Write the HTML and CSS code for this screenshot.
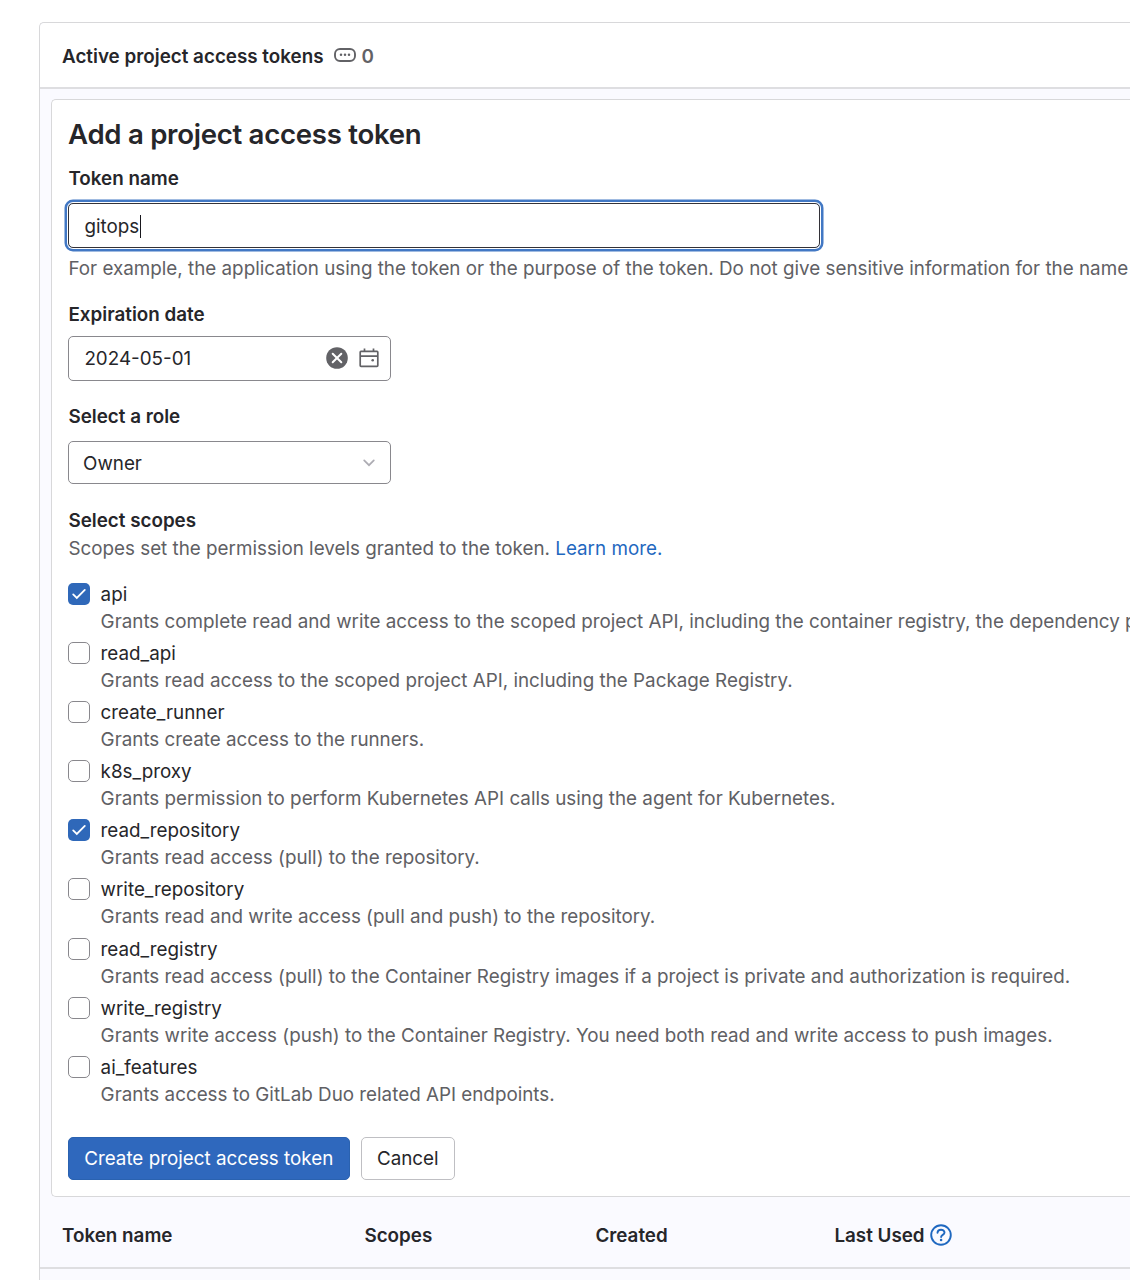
FILE: index.html
```html
<!DOCTYPE html>
<html lang="en">
<head>
<meta charset="utf-8">
<title>Project access tokens</title>
<link rel="stylesheet" href="styles.css">
</head>
<body>
<main class="card">
  <header class="card-header">
    <h2 class="card-title">Active project access tokens</h2>
    <svg class="token-icon" viewBox="0 0 22 14" width="22" height="14"><rect x="1" y="1" width="20" height="12" rx="5" fill="none" stroke="#626266" stroke-width="1.9"/><g fill="#626266"><circle cx="7" cy="6.7" r="1.25"/><circle cx="11" cy="6.7" r="1.25"/><circle cx="15" cy="6.7" r="1.25"/></g></svg>
    <span class="count">0</span>
  </header>
  <form class="form-card">
    <h1 class="form-title"><span>Add a project access token</span></h1>
    <div class="label label-name"><span>Token name</span></div>
    <div class="input input-name"><span>gitops</span><i class="caret"></i></div>
    <p class="hint hint-name"><span>For example, the application using the token or the purpose of the token. Do not give sensitive information for the name</span></p>
    <div class="label label-date"><span>Expiration date</span></div>
    <div class="input input-date">
      <span class="value">2024-05-01</span>
      <svg class="clear" width="22" height="22" viewBox="0 0 22 22"><circle cx="11" cy="11" r="10.8" fill="#626266"/><path d="M6.7 6.7l8.6 8.6M15.3 6.7l-8.6 8.6" stroke="#fff" stroke-width="2" stroke-linecap="round"/></svg>
      <svg class="calendar" width="20" height="20" viewBox="0 0 20 20" fill="none" stroke="#626266" stroke-width="1.7"><rect x="1.2" y="3.4" width="17.6" height="15" rx="0.8"/><path d="M1.2 8.2h17.6M5.5 0.5v3.2M14.5 0.5v3.2"/><circle cx="13.7" cy="12.2" r="1.3" fill="#626266" stroke="none"/></svg>
    </div>
    <div class="label label-role"><span>Select a role</span></div>
    <div class="input input-role">
      <span class="value">Owner</span>
      <svg width="12" height="8" viewBox="0 0 12 8"><path d="M1.2 1.3L6 6.2l4.8-4.9" fill="none" stroke="#adacb3" stroke-width="1.7" stroke-linecap="round"/></svg>
    </div>
    <div class="label label-scopes"><span>Select scopes</span></div>
    <p class="hint hint-scopes">Scopes set the permission levels granted to the token. <a class="link">Learn more.</a></p>
    <ul class="scopes">
      <li class="scope"><span class="box checked"><svg width="22" height="22" viewBox="0 0 22 22"><path d="M5.2 11.4l3.6 3.6 8-8.1" fill="none" stroke="#fff" stroke-width="1.8" stroke-linecap="round"/></svg></span><span class="name">api</span><span class="desc">Grants complete read and write access to the scoped project API, including the container registry, the dependency proxy.</span></li>
      <li class="scope"><span class="box"></span><span class="name">read_api</span><span class="desc">Grants read access to the scoped project API, including the Package Registry.</span></li>
      <li class="scope"><span class="box"></span><span class="name">create_runner</span><span class="desc">Grants create access to the runners.</span></li>
      <li class="scope"><span class="box"></span><span class="name">k8s_proxy</span><span class="desc">Grants permission to perform Kubernetes API calls using the agent for Kubernetes.</span></li>
      <li class="scope"><span class="box checked"><svg width="22" height="22" viewBox="0 0 22 22"><path d="M5.2 11.4l3.6 3.6 8-8.1" fill="none" stroke="#fff" stroke-width="1.8" stroke-linecap="round"/></svg></span><span class="name">read_repository</span><span class="desc">Grants read access (pull) to the repository.</span></li>
      <li class="scope"><span class="box"></span><span class="name">write_repository</span><span class="desc">Grants read and write access (pull and push) to the repository.</span></li>
      <li class="scope"><span class="box"></span><span class="name">read_registry</span><span class="desc">Grants read access (pull) to the Container Registry images if a project is private and authorization is required.</span></li>
      <li class="scope"><span class="box"></span><span class="name">write_registry</span><span class="desc">Grants write access (push) to the Container Registry. You need both read and write access to push images.</span></li>
      <li class="scope"><span class="box"></span><span class="name">ai_features</span><span class="desc">Grants access to GitLab Duo related API endpoints.</span></li>
    </ul>
    <div class="actions">
      <button type="button" class="btn btn-confirm">Create project access token</button>
      <button type="button" class="btn btn-cancel">Cancel</button>
    </div>
  </form>
  <div class="table-head">
    <span>Token name</span>
    <span>Scopes</span>
    <span>Created</span>
    <span class="last-used">Last Used
      <svg width="22" height="22" viewBox="0 0 22 22" fill="none" stroke="#1f68c0"><circle cx="11" cy="11" r="9.8" stroke-width="1.9"/><path d="M7.5 8.7C7.6 6.8 9 5.7 11 5.7s3.5 1.1 3.5 2.9c0 2.3-3.4 2.3-3.4 4.4" stroke-width="1.9" stroke-linecap="round"/><circle cx="11.1" cy="16" r="1.3" fill="#1f68c0" stroke="none"/></svg>
    </span>
  </div>
</main>
</body>
</html>
```
FILE: styles.css
```css
* { box-sizing: border-box; }
body {
  margin: 0;
  height: 1280px;
  overflow: hidden;
  background: #fff;
  color: #26262a;
  font: 400 18.82px/27px Inter, "Noto Sans", sans-serif;
  white-space: nowrap;
}
h1, h2, p, ul { margin: 0; padding: 0; }
.card {
  height: 1300px;
  margin: 22px 0 0 39px;
  border: 1px solid #d8d8da;
  border-right: 0;
  border-radius: 5px 0 0 0;
  background: #fafaff;
}
.card-header {
  display: flex;
  align-items: center;
  height: 66px;
  padding: 0 0 0 22px;
  border-bottom: 2px solid #dedee1;
  border-radius: 5px 0 0 0;
  background: #fff;
}
.card-title { padding-top: 2px; font-size: inherit; font-weight: 600; }
.token-icon { margin: 0 6px 0 10px; }
.count { padding-top: 2px; color: #626266; font-weight: 600; }
.form-card {
  display: block;
  height: 1098px;
  margin: 10px 0 0 11px;
  padding: 16px 0 0 16px;
  border: 1px solid #d8d8da;
  border-right: 0;
  border-radius: 5px 0 0 5px;
  background: #fff;
  overflow: hidden;
}
.form-title { font-size: 27.6px; font-weight: 600; line-height: 36px; letter-spacing: -0.28px; }
.label { padding-left: 0.4px; font-weight: 600; }
.label-name { margin-top: 13px; }
.label-date { margin-top: 19px; }
.label-role { margin-top: 22px; }
.label-scopes { margin-top: 23px; }
.input {
  display: flex;
  align-items: center;
  width: 323px;
  padding: 0 11px 0 15px;
  border: 1.4px solid #89888d;
  border-radius: 5px;
}
.input .value { flex: 1; }
.input-name {
  width: 752px;
  height: 45px;
  margin-top: 11px;
  padding-top: 2px;
  padding-left: 15.4px;
  border-color: #333238;
  box-shadow: 0 0 0 1px #fff, 0 0 0 3.5px #4278c4;
}
.caret { width: 1px; height: 23px; margin-left: 0.6px; background: #18171d; }
.hint { padding-left: 0.4px; color: #606064; }
.hint-name { margin-top: 7px; }
.hint-scopes { margin-top: 1px; }
.input-date { height: 45px; margin-top: 8px; padding-left: 15.4px; }
.clear, .calendar { margin-bottom: 1px; }
.calendar { margin-left: 11px; }
.input-role { height: 43px; margin-top: 11px; padding: 0 15px 0 14px; }
.input-role .value { padding-top: 2px; }
.link { color: #1f68c0; }
.scopes { margin-top: 19px; list-style: none; }
.scope {
  display: grid;
  grid-template: 27px 27px / 22px 1fr;
  column-gap: 10.6px;
  align-items: center;
  height: 59.1px;
  align-content: start;
}
.box { width: 22px; height: 22px; margin-bottom: 1px; border: 1.4px solid #89888d; border-radius: 5px; }
.checked { border: 0; background: #2f68b9; }
.checked svg { display: block; }
.desc { grid-column: 2; color: #606064; }
.actions { display: flex; gap: 11px; margin-top: 24px; }
.btn {
  height: 43px;
  padding: 0;
  border: 1px solid #bfbfc3;
  border-radius: 5px;
  background: #fff;
  color: #26262a;
  font: inherit;
}
.btn-confirm { width: 281.5px; border-color: #2a62b0; background: #2f68bd; color: #fff; }
.btn-cancel { width: 94.5px; }
.table-head {
  display: grid;
  grid-template-columns: 302.4px 231px 239px 1fr;
  align-items: center;
  height: 72px;
  padding: 6px 0 0 22px;
  border-bottom: 2px solid #dedee1;
  font-weight: 600;
}
.last-used { display: flex; align-items: center; gap: 5px; }
```
